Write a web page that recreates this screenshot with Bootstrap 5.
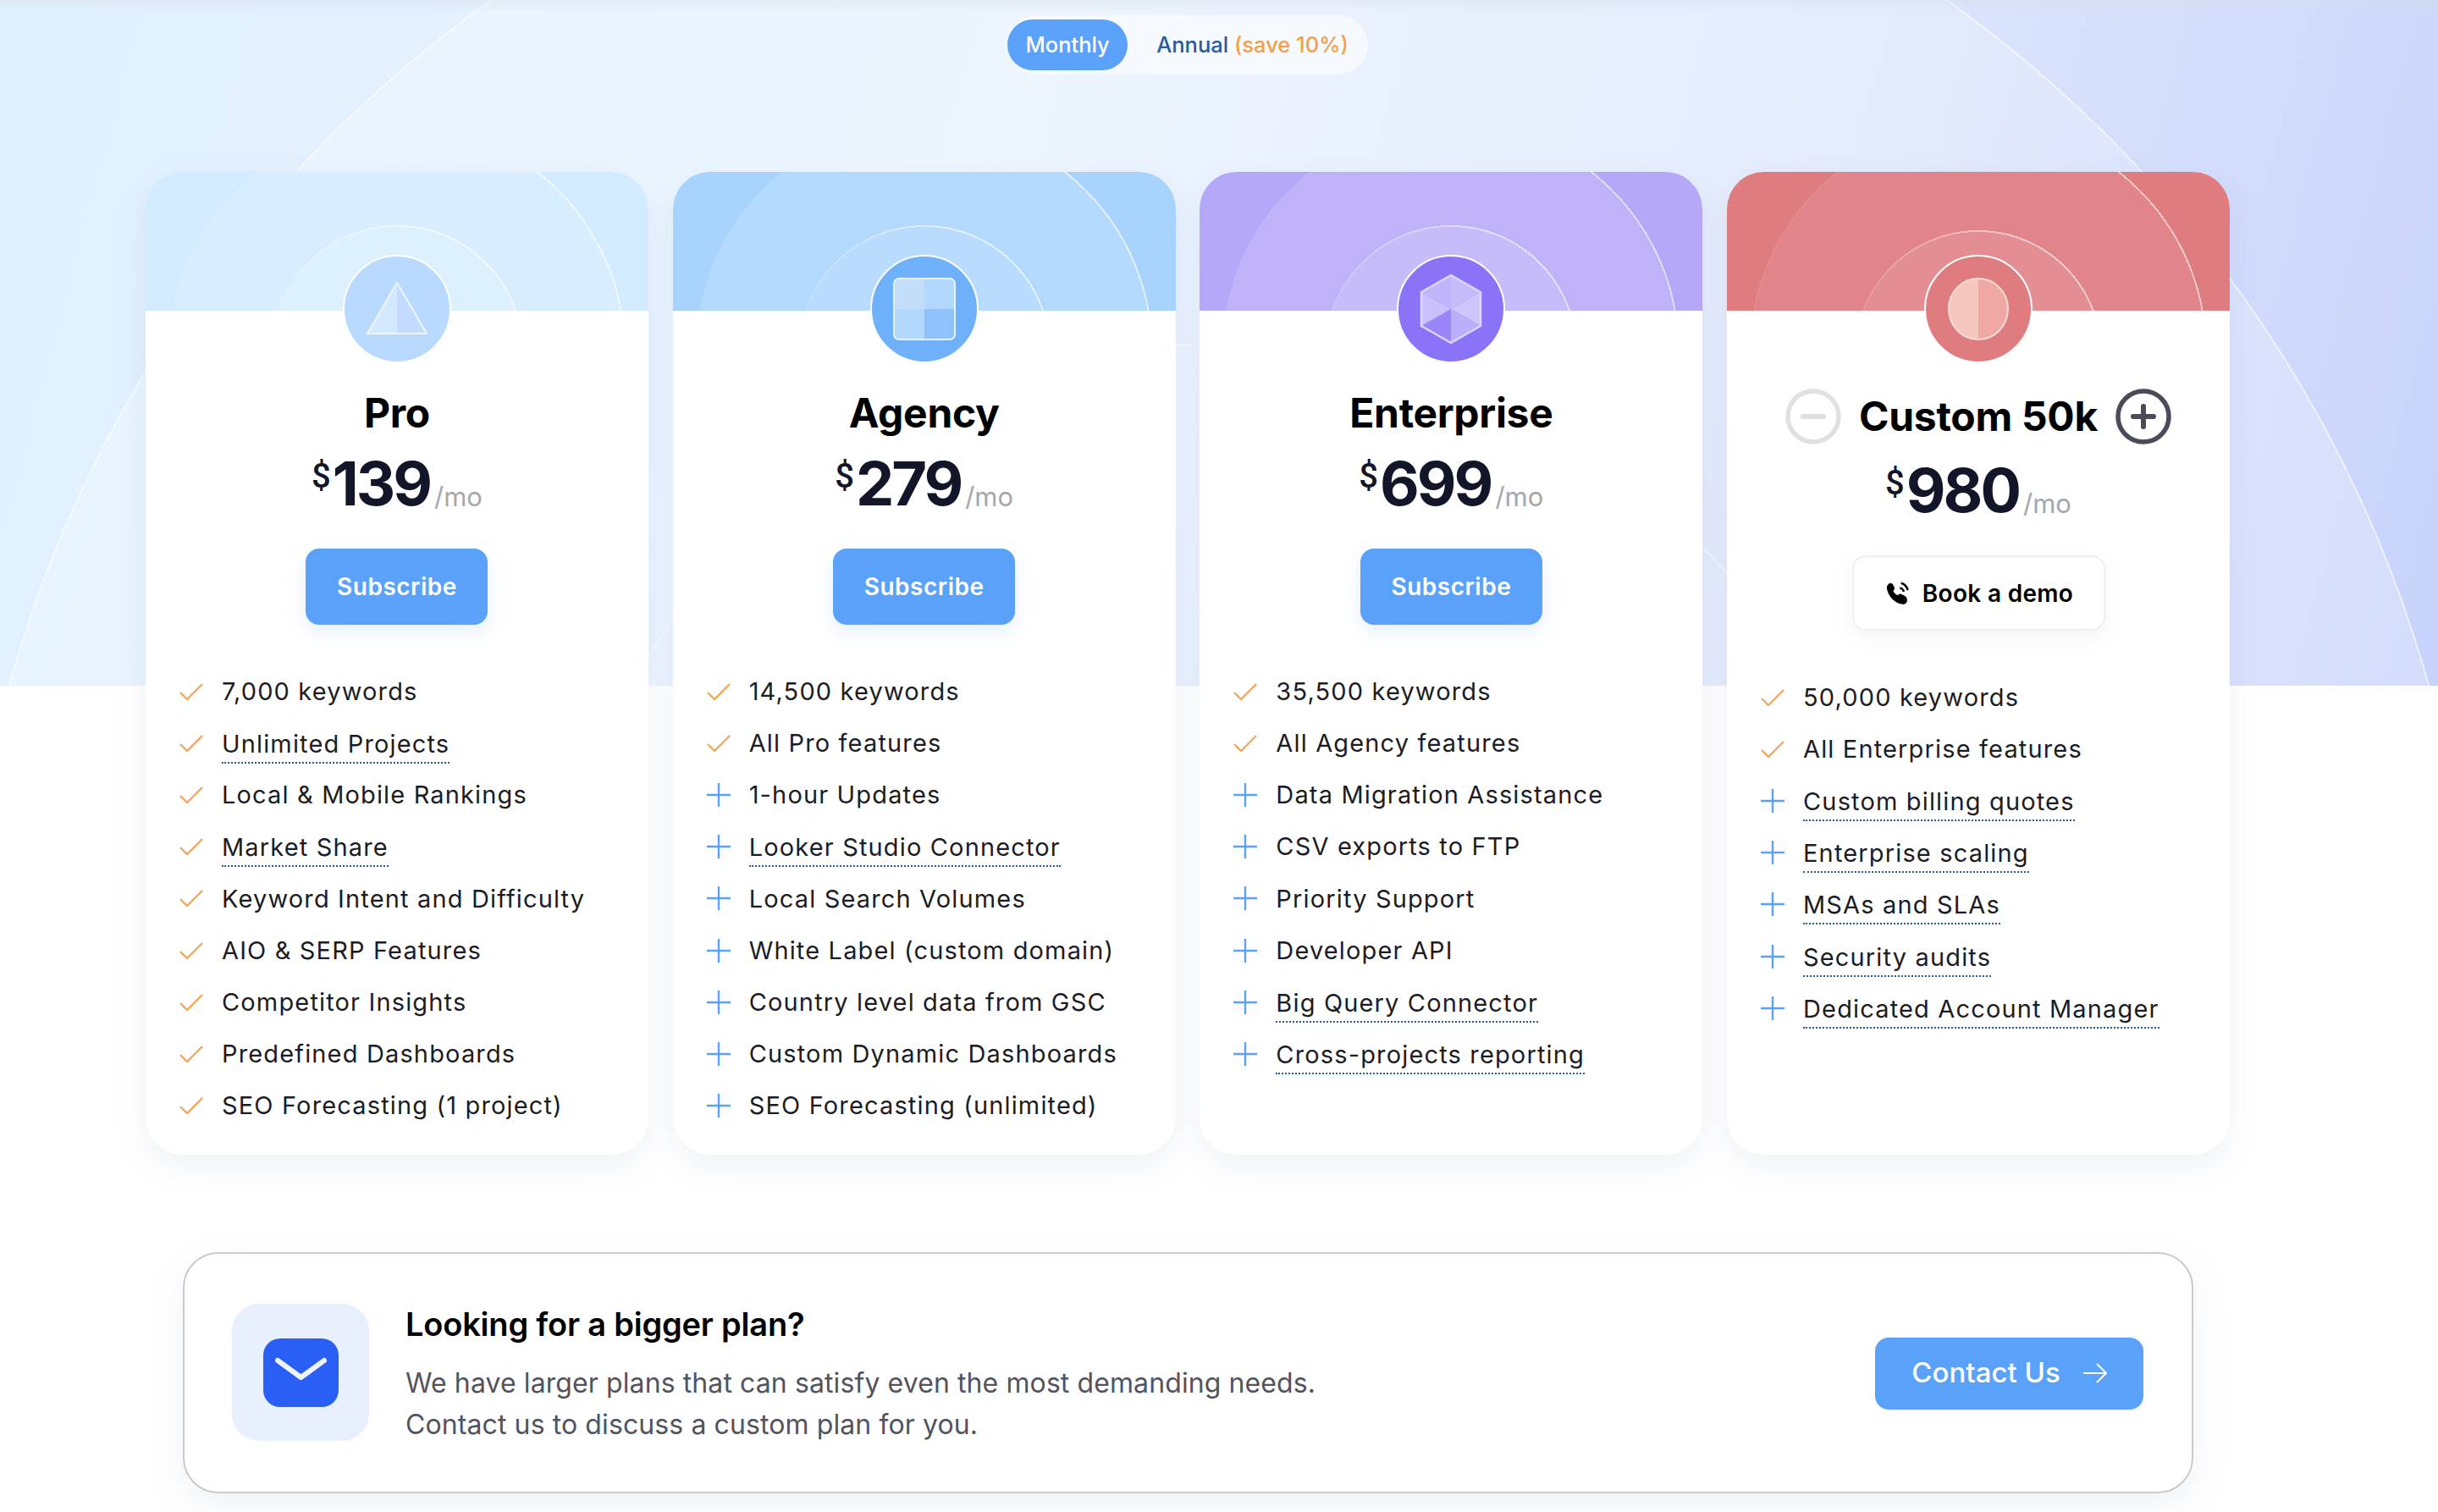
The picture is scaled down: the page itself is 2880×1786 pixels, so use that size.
<!DOCTYPE html>
<html lang="en">
<head>
  <meta charset="UTF-8">
  <title>Pricing</title>
  <link href="https://cdn.jsdelivr.net/npm/bootstrap@5.3.3/dist/css/bootstrap.min.css" rel="stylesheet">
  <style>
    body {
      font-family: Inter, "Liberation Sans", sans-serif;
      background: #fff;
      color: #1c1c24;
    }
    .page-bg {
      min-height: 1786px;
      background-color: #fff;
      background-repeat: no-repeat;
      background-size: 100% 810px;
      background-image:
        linear-gradient(180deg, rgba(215,222,232,.4), rgba(215,222,232,0) 16px),
        radial-gradient(circle 801px at 1440px 1206px, rgba(255,255,255,.06) calc(100% - 2px), rgba(255,255,255,.5) calc(100% - 2px), rgba(255,255,255,.5) 100%, rgba(255,255,255,0) 100%),
        radial-gradient(circle 1485px at 1440px 1210px, rgba(255,255,255,.22) calc(100% - 2px), rgba(255,255,255,.65) calc(100% - 2px), rgba(255,255,255,.65) 100%, rgba(255,255,255,0) 100%),
        linear-gradient(105deg, #e0f0fe 0%, #e8f2fe 40%, #dde6fc 72%, #c8d3fb 100%);
    }
    .page-wrap {
      width: 2462px;
      margin-left: 172px;
    }
    .bill-toggle {
      height: 70px;
      margin-top: 18px;
      padding: 5px 23px 5px 0;
      border-radius: 35px;
      background: rgba(255,255,255,.55);
      font-size: 25.5px;
      font-weight: 500;
    }
    .bill-active {
      width: 142px;
      height: 60px;
      border-radius: 30px;
      background: #5aa1f9;
      color: #fff;
    }
    .bill-annual { color: #2a5a9e; margin-left: 34px; }
    .bill-save { color: #f59e4c; }

    .plan-row { gap: 28.7px; margin-top: 115px; }
    .plan-card {
      width: 594px;
      height: 1160.5px;
      border: 0;
      border-radius: 44px;
      background: #fff;
      box-shadow: 0 14px 36px rgba(110,130,180,.1);
      overflow: hidden;
    }
    .plan-head {
      height: 164px;
      --ring-big: 270px;
      --ring-small: 149px;
      --ring-y: 212px;
      background-color: var(--tone-base);
      background-image:
        radial-gradient(circle var(--ring-small) at 50% var(--ring-y), var(--tone-inner) 100%, rgba(255,255,255,0) 100%),
        radial-gradient(circle var(--ring-big) at 50% 212px, var(--tone-outer) 100%, rgba(255,255,255,0) 100%);
    }
    /* thin ring lines, they fade out to the left */
    .plan-head::before {
      content: "";
      position: absolute;
      inset: 0;
      background-image:
        radial-gradient(circle var(--ring-small) at 50% var(--ring-y), rgba(255,255,255,0) calc(100% - 2px), var(--tone-line) calc(100% - 2px), var(--tone-line) 100%, rgba(255,255,255,0) 100%),
        radial-gradient(circle var(--ring-big) at 50% 212px, rgba(255,255,255,0) calc(100% - 2px), var(--tone-line) calc(100% - 2px), var(--tone-line) 100%, rgba(255,255,255,0) 100%);
      -webkit-mask-image: linear-gradient(90deg, rgba(0,0,0,.08) 22%, #000 58%);
      mask-image: linear-gradient(90deg, rgba(0,0,0,.08) 22%, #000 58%);
    }
    .tone-pro { --tone-base: #d3ebff; --tone-outer: #d8edfe; --tone-inner: #dcf0fe; --tone-line: rgba(255,255,255,.6); --tone-avatar: #b9d9fe; }
    .tone-agency { --tone-base: #a8d3fc; --tone-outer: #b3d9fd; --tone-inner: #b9dcfe; --tone-line: rgba(255,255,255,.6); --tone-avatar: #6fb0fa; }
    .tone-ent { --tone-base: #b6a8f8; --tone-outer: #bfb2f9; --tone-inner: #c6bcfa; --tone-line: rgba(255,255,255,.55); --tone-avatar: #8b73f8; }
    .tone-custom { --tone-base: #de7c7f; --tone-outer: #e1858a; --tone-inner: #e38e92; --tone-line: rgba(255,255,255,.55); --tone-avatar: #df7c80; }
    .tone-custom .plan-head { --ring-small: 146px; --ring-y: 215px; }

    .plan-avatar {
      width: 128px;
      height: 128px;
      margin: -66px auto 30px;
      border: 2.5px solid #fff;
      border-radius: 50%;
      background: var(--tone-avatar);
    }
    .plan-title {
      height: 58px;
      margin: 0;
      font-size: 48px;
      font-weight: 700;
      letter-spacing: -.3px;
      color: #000;
    }
    .plan-title-custom { height: 66px; gap: 21px; }
    .step-btn {
      width: 66px;
      height: 66px;
      padding: 0;
      border: 0;
      background: none;
    }
    .step-btn svg { display: block; }
    .plan-price {
      height: 92px;
      margin: 8px 0 31px;
      color: #131628;
      font-weight: 700;
      font-size: 72px;
      letter-spacing: -3px;
      line-height: 1;
    }
    .price-sign {
      font-family: Roboto, sans-serif;
      font-size: 40px;
      font-weight: 500;
      letter-spacing: 0;
      margin-top: -17px;
      margin-right: 2px;
    }
    .price-unit {
      font-size: 31px;
      font-weight: 400;
      letter-spacing: 0;
      color: #a6a6ab;
      margin-left: 5px;
      margin-bottom: -1px;
    }
    .btn-sub {
      width: 215px;
      height: 90px;
      padding: 0;
      border: 0;
      border-radius: 16px;
      background: #5aa1f9;
      color: #fff;
      font-size: 28px;
      font-weight: 600;
      letter-spacing: .5px;
      box-shadow: 0 8px 22px rgba(90,161,249,.16);
    }
    .btn-sub:hover { background: #5aa1f9; color: #fff; }
    .btn-demo {
      width: 299px;
      height: 89px;
      gap: 14px;
      padding: 0;
      border: 2px solid #efeff1;
      border-radius: 16px;
      background: #fff;
      color: #000;
      font-size: 28px;
      font-weight: 600;
      letter-spacing: .3px;
      box-shadow: 0 8px 22px rgba(120,130,170,.08);
    }
    .feat-list {
      margin: 48px 0 0;
      padding: 0 0 0 40px;
      list-style: none;
    }
    .feat-list li {
      display: flex;
      align-items: center;
      gap: 22px;
      height: 61.2px;
      font-size: 29px;
      letter-spacing: 1.15px;
      color: #1c1c24;
    }
    .feat-list svg { flex: none; }
    .feat-tip {
      display: inline-block;
      line-height: 42px;
      border-bottom: 2px dotted #2a5a9e;
      padding-top: 2px;
      margin-bottom: -2px;
    }

    .more-box {
      width: 2375px;
      height: 285px;
      margin: 115px 0 0 44px;
      padding: 0 57px 0 56px;
      border: 2px solid #c9cad0;
      border-radius: 42px;
      background: #fff;
      box-shadow: 0 14px 40px rgba(130,145,185,.12);
    }
    .more-tile {
      width: 162px;
      height: 162px;
      border-radius: 32px;
      background: #e9f0fd;
    }
    .more-copy { margin-left: 43px; padding-top: 4px; }
    .more-title {
      font-size: 38px;
      font-weight: 600;
      letter-spacing: -.2px;
      color: #000;
      margin: 0 0 21px;
      line-height: 50px;
    }
    .more-text {
      font-size: 32px;
      letter-spacing: .1px;
      line-height: 48.7px;
      color: #53535f;
      margin: 0;
    }
    .btn-contact {
      width: 317px;
      height: 85px;
      margin-top: 2px;
      gap: 27px;
      padding: 0;
      border: 0;
      border-radius: 16px;
      background: #5aa1f9;
      color: #fff;
      font-size: 33px;
      font-weight: 500;
    }
    .btn-contact:hover { background: #5aa1f9; color: #fff; }
  </style>
</head>
<body>

<div class="page-bg overflow-hidden">
  <div class="page-wrap">

    <div class="d-flex justify-content-center">
      <div class="bill-toggle d-inline-flex align-items-center">
        <span class="bill-active d-flex align-items-center justify-content-center">Monthly</span>
        <span class="bill-annual">Annual <span class="bill-save">(save 10%)</span></span>
      </div>
    </div>

    <div class="plan-row d-flex align-items-start">

      <!-- Pro -->
      <div class="card plan-card tone-pro">
        <div class="plan-head position-relative"></div>
        <div class="plan-avatar position-relative d-flex align-items-center justify-content-center">
          <svg width="74" height="66" viewBox="0 0 74 66">
            <path d="M37 2 2 62h35z" fill="#d2e9ff"/>
            <path d="M37 2l35 60H37z" fill="#c3dcfe"/>
            <path d="M37 2 2 62h70z" fill="none" stroke="#eef7ff" stroke-width="2" stroke-linejoin="round"/>
          </svg>
        </div>
        <h3 class="plan-title d-flex align-items-center justify-content-center">Pro</h3>
        <div class="plan-price d-flex align-items-center justify-content-center">
          <span class="price-sign align-self-center">$</span><span>139</span><span class="price-unit align-self-end pb-3">/mo</span>
        </div>
        <div class="text-center"><button class="btn btn-sub" type="button">Subscribe</button></div>
        <ul class="feat-list">
          <li><svg width="28" height="20" viewBox="0 0 28 20"><path d="M1 11l8 8L27 1" fill="none" stroke="#f6a55c" stroke-width="2.4"/></svg><span>7,000 keywords</span></li>
          <li><svg width="28" height="20" viewBox="0 0 28 20"><path d="M1 11l8 8L27 1" fill="none" stroke="#f6a55c" stroke-width="2.4"/></svg><span class="feat-tip">Unlimited Projects</span></li>
          <li><svg width="28" height="20" viewBox="0 0 28 20"><path d="M1 11l8 8L27 1" fill="none" stroke="#f6a55c" stroke-width="2.4"/></svg><span>Local &amp; Mobile Rankings</span></li>
          <li><svg width="28" height="20" viewBox="0 0 28 20"><path d="M1 11l8 8L27 1" fill="none" stroke="#f6a55c" stroke-width="2.4"/></svg><span class="feat-tip">Market Share</span></li>
          <li><svg width="28" height="20" viewBox="0 0 28 20"><path d="M1 11l8 8L27 1" fill="none" stroke="#f6a55c" stroke-width="2.4"/></svg><span>Keyword Intent and Difficulty</span></li>
          <li><svg width="28" height="20" viewBox="0 0 28 20"><path d="M1 11l8 8L27 1" fill="none" stroke="#f6a55c" stroke-width="2.4"/></svg><span>AIO &amp; SERP Features</span></li>
          <li><svg width="28" height="20" viewBox="0 0 28 20"><path d="M1 11l8 8L27 1" fill="none" stroke="#f6a55c" stroke-width="2.4"/></svg><span>Competitor Insights</span></li>
          <li><svg width="28" height="20" viewBox="0 0 28 20"><path d="M1 11l8 8L27 1" fill="none" stroke="#f6a55c" stroke-width="2.4"/></svg><span>Predefined Dashboards</span></li>
          <li><svg width="28" height="20" viewBox="0 0 28 20"><path d="M1 11l8 8L27 1" fill="none" stroke="#f6a55c" stroke-width="2.4"/></svg><span>SEO Forecasting (1 project)</span></li>
        </ul>
      </div>

      <!-- Agency -->
      <div class="card plan-card tone-agency">
        <div class="plan-head position-relative"></div>
        <div class="plan-avatar position-relative d-flex align-items-center justify-content-center">
          <svg width="76" height="76" viewBox="0 0 76 76">
            <path d="M8 2h30v36H2V8a6 6 0 0 1 6-6z" fill="#c2def9"/>
            <path d="M38 2h30a6 6 0 0 1 6 6v30H38z" fill="#b3d8fe"/>
            <path d="M2 38h36v36H8a6 6 0 0 1-6-6z" fill="#b3d8fe"/>
            <path d="M38 38h36v30a6 6 0 0 1-6 6H38z" fill="#8fc1fb"/>
            <rect x="2" y="2" width="72" height="72" rx="6" fill="none" stroke="#e6f2ff" stroke-width="2"/>
          </svg>
        </div>
        <h3 class="plan-title d-flex align-items-center justify-content-center">Agency</h3>
        <div class="plan-price d-flex align-items-center justify-content-center">
          <span class="price-sign align-self-center">$</span><span>279</span><span class="price-unit align-self-end pb-3">/mo</span>
        </div>
        <div class="text-center"><button class="btn btn-sub" type="button">Subscribe</button></div>
        <ul class="feat-list">
          <li><svg width="28" height="20" viewBox="0 0 28 20"><path d="M1 11l8 8L27 1" fill="none" stroke="#f6a55c" stroke-width="2.4"/></svg><span>14,500 keywords</span></li>
          <li><svg width="28" height="20" viewBox="0 0 28 20"><path d="M1 11l8 8L27 1" fill="none" stroke="#f6a55c" stroke-width="2.4"/></svg><span>All Pro features</span></li>
          <li><svg width="28" height="28" viewBox="0 0 28 28"><path d="M14 0v28M0 14h28" stroke="#5aa1f9" stroke-width="2.4"/></svg><span>1-hour Updates</span></li>
          <li><svg width="28" height="28" viewBox="0 0 28 28"><path d="M14 0v28M0 14h28" stroke="#5aa1f9" stroke-width="2.4"/></svg><span class="feat-tip">Looker Studio Connector</span></li>
          <li><svg width="28" height="28" viewBox="0 0 28 28"><path d="M14 0v28M0 14h28" stroke="#5aa1f9" stroke-width="2.4"/></svg><span>Local Search Volumes</span></li>
          <li><svg width="28" height="28" viewBox="0 0 28 28"><path d="M14 0v28M0 14h28" stroke="#5aa1f9" stroke-width="2.4"/></svg><span>White Label (custom domain)</span></li>
          <li><svg width="28" height="28" viewBox="0 0 28 28"><path d="M14 0v28M0 14h28" stroke="#5aa1f9" stroke-width="2.4"/></svg><span>Country level data from GSC</span></li>
          <li><svg width="28" height="28" viewBox="0 0 28 28"><path d="M14 0v28M0 14h28" stroke="#5aa1f9" stroke-width="2.4"/></svg><span>Custom Dynamic Dashboards</span></li>
          <li><svg width="28" height="28" viewBox="0 0 28 28"><path d="M14 0v28M0 14h28" stroke="#5aa1f9" stroke-width="2.4"/></svg><span>SEO Forecasting (unlimited)</span></li>
        </ul>
      </div>

      <!-- Enterprise -->
      <div class="card plan-card tone-ent">
        <div class="plan-head position-relative"></div>
        <div class="plan-avatar position-relative d-flex align-items-center justify-content-center">
          <svg width="74" height="84" viewBox="0 0 74 84">
            <path d="M37 42V2L2 22z" fill="#c0b4fb"/>
            <path d="M37 42V2l35 20z" fill="#c6bbfb"/>
            <path d="M37 42l35-20v40z" fill="#cec5fc"/>
            <path d="M37 42l35 20-35 20z" fill="#bbaefb"/>
            <path d="M37 42v40L2 62z" fill="#9a86f9"/>
            <path d="M37 42 2 62V22z" fill="#cac0fc"/>
            <path d="M37 2l35 20v40L37 82 2 62V22z" fill="none" stroke="#ddd7fd" stroke-width="2.5" stroke-linejoin="round"/>
          </svg>
        </div>
        <h3 class="plan-title d-flex align-items-center justify-content-center">Enterprise</h3>
        <div class="plan-price d-flex align-items-center justify-content-center">
          <span class="price-sign align-self-center">$</span><span>699</span><span class="price-unit align-self-end pb-3">/mo</span>
        </div>
        <div class="text-center"><button class="btn btn-sub" type="button">Subscribe</button></div>
        <ul class="feat-list">
          <li><svg width="28" height="20" viewBox="0 0 28 20"><path d="M1 11l8 8L27 1" fill="none" stroke="#f6a55c" stroke-width="2.4"/></svg><span>35,500 keywords</span></li>
          <li><svg width="28" height="20" viewBox="0 0 28 20"><path d="M1 11l8 8L27 1" fill="none" stroke="#f6a55c" stroke-width="2.4"/></svg><span>All Agency features</span></li>
          <li><svg width="28" height="28" viewBox="0 0 28 28"><path d="M14 0v28M0 14h28" stroke="#5aa1f9" stroke-width="2.4"/></svg><span>Data Migration Assistance</span></li>
          <li><svg width="28" height="28" viewBox="0 0 28 28"><path d="M14 0v28M0 14h28" stroke="#5aa1f9" stroke-width="2.4"/></svg><span>CSV exports to FTP</span></li>
          <li><svg width="28" height="28" viewBox="0 0 28 28"><path d="M14 0v28M0 14h28" stroke="#5aa1f9" stroke-width="2.4"/></svg><span>Priority Support</span></li>
          <li><svg width="28" height="28" viewBox="0 0 28 28"><path d="M14 0v28M0 14h28" stroke="#5aa1f9" stroke-width="2.4"/></svg><span>Developer API</span></li>
          <li><svg width="28" height="28" viewBox="0 0 28 28"><path d="M14 0v28M0 14h28" stroke="#5aa1f9" stroke-width="2.4"/></svg><span class="feat-tip">Big Query Connector</span></li>
          <li><svg width="28" height="28" viewBox="0 0 28 28"><path d="M14 0v28M0 14h28" stroke="#5aa1f9" stroke-width="2.4"/></svg><span class="feat-tip">Cross-projects reporting</span></li>
        </ul>
      </div>

      <!-- Custom -->
      <div class="card plan-card tone-custom">
        <div class="plan-head position-relative"></div>
        <div class="plan-avatar position-relative d-flex align-items-center justify-content-center">
          <svg width="74" height="76" viewBox="0 0 74 76">
            <path d="M37 2C18 2 2 18 2 38s16 36 35 36z" fill="#f5c6bd"/>
            <path d="M37 2c19 0 35 16 35 36S56 74 37 74z" fill="#f0a8a5"/>
            <ellipse cx="37" cy="38" rx="35" ry="36" fill="none" stroke="#f8dcd8" stroke-width="2"/>
          </svg>
        </div>
        <div class="plan-title plan-title-custom d-flex align-items-center justify-content-center">
          <button class="step-btn" type="button" aria-label="Less">
            <svg width="66" height="66" viewBox="0 0 66 66"><circle cx="33" cy="33" r="30" fill="none" stroke="#e0e2e2" stroke-width="5.5"/><path d="M21 33h24" stroke="#dedfdf" stroke-width="6" stroke-linecap="round"/></svg>
          </button>
          <span>Custom 50k</span>
          <button class="step-btn" type="button" aria-label="More">
            <svg width="66" height="66" viewBox="0 0 66 66"><circle cx="33" cy="33" r="30" fill="none" stroke="#4a4c5a" stroke-width="5.5"/><path d="M21 33h24M33 21v24" stroke="#4a4c5a" stroke-width="6" stroke-linecap="round"/></svg>
          </button>
        </div>
        <div class="plan-price d-flex align-items-center justify-content-center">
          <span class="price-sign align-self-center">$</span><span>980</span><span class="price-unit align-self-end pb-3">/mo</span>
        </div>
        <div class="text-center">
          <button class="btn btn-demo d-inline-flex align-items-center justify-content-center" type="button">
            <svg width="32" height="32" viewBox="0 0 24 24">
              <path d="M20.500 18.200c0 1.600-1.500 3.100-3.100 3-3.700-.3-6.700-1.900-9.300-4.500C5.500 14.100 3.700 10.800 3.300 7.100 3.200 5.500 4.400 3.500 6 3.200c.8-.1 1.500.3 1.900 1l1.300 2.600c.3.700.2 1.400-.3 1.900l-.9 1c.9 2 2.400 3.600 4.500 4.600l1-1c.5-.5 1.300-.6 1.900-.3l3.100 1.500c1.100.6 1.900 1.500 2 2.700z" fill="#000" stroke="#000" stroke-width=".8"/>
              <path d="M14.500 7a4.500 4.500 0 0 1 3.500 3.500M15.500 2.800a8.500 8.500 0 0 1 6 6.400" fill="none" stroke="#000" stroke-width="1.800"/>
            </svg>
            Book a demo
          </button>
        </div>
        <ul class="feat-list">
          <li><svg width="28" height="20" viewBox="0 0 28 20"><path d="M1 11l8 8L27 1" fill="none" stroke="#f6a55c" stroke-width="2.4"/></svg><span>50,000 keywords</span></li>
          <li><svg width="28" height="20" viewBox="0 0 28 20"><path d="M1 11l8 8L27 1" fill="none" stroke="#f6a55c" stroke-width="2.4"/></svg><span>All Enterprise features</span></li>
          <li><svg width="28" height="28" viewBox="0 0 28 28"><path d="M14 0v28M0 14h28" stroke="#5aa1f9" stroke-width="2.4"/></svg><span class="feat-tip">Custom billing quotes</span></li>
          <li><svg width="28" height="28" viewBox="0 0 28 28"><path d="M14 0v28M0 14h28" stroke="#5aa1f9" stroke-width="2.4"/></svg><span class="feat-tip">Enterprise scaling</span></li>
          <li><svg width="28" height="28" viewBox="0 0 28 28"><path d="M14 0v28M0 14h28" stroke="#5aa1f9" stroke-width="2.4"/></svg><span class="feat-tip">MSAs and SLAs</span></li>
          <li><svg width="28" height="28" viewBox="0 0 28 28"><path d="M14 0v28M0 14h28" stroke="#5aa1f9" stroke-width="2.4"/></svg><span class="feat-tip">Security audits</span></li>
          <li><svg width="28" height="28" viewBox="0 0 28 28"><path d="M14 0v28M0 14h28" stroke="#5aa1f9" stroke-width="2.4"/></svg><span class="feat-tip">Dedicated Account Manager</span></li>
        </ul>
      </div>

    </div>

    <div class="more-box d-flex align-items-center">
      <div class="more-tile d-flex align-items-center justify-content-center flex-shrink-0">
        <svg width="89" height="81" viewBox="0 0 89 81">
          <rect width="89" height="81" rx="20" fill="#2a5ff5"/>
          <path d="M17 26l27.500 20L72 26" fill="none" stroke="#eef3fe" stroke-width="6" stroke-linecap="round" stroke-linejoin="round"/>
        </svg>
      </div>
      <div class="more-copy flex-grow-1">
        <h4 class="more-title">Looking for a bigger plan?</h4>
        <p class="more-text">We have larger plans that can satisfy even the most demanding needs.<br>Contact us to discuss a custom plan for you.</p>
      </div>
      <button class="btn btn-contact d-flex align-items-center justify-content-center flex-shrink-0" type="button">
        Contact Us
        <svg width="28" height="24" viewBox="0 0 28 24"><path d="M0 12h27M16 1l11 11-11 11" fill="none" stroke="#fff" stroke-width="2"/></svg>
      </button>
    </div>

  </div>
</div>

</body>
</html>
